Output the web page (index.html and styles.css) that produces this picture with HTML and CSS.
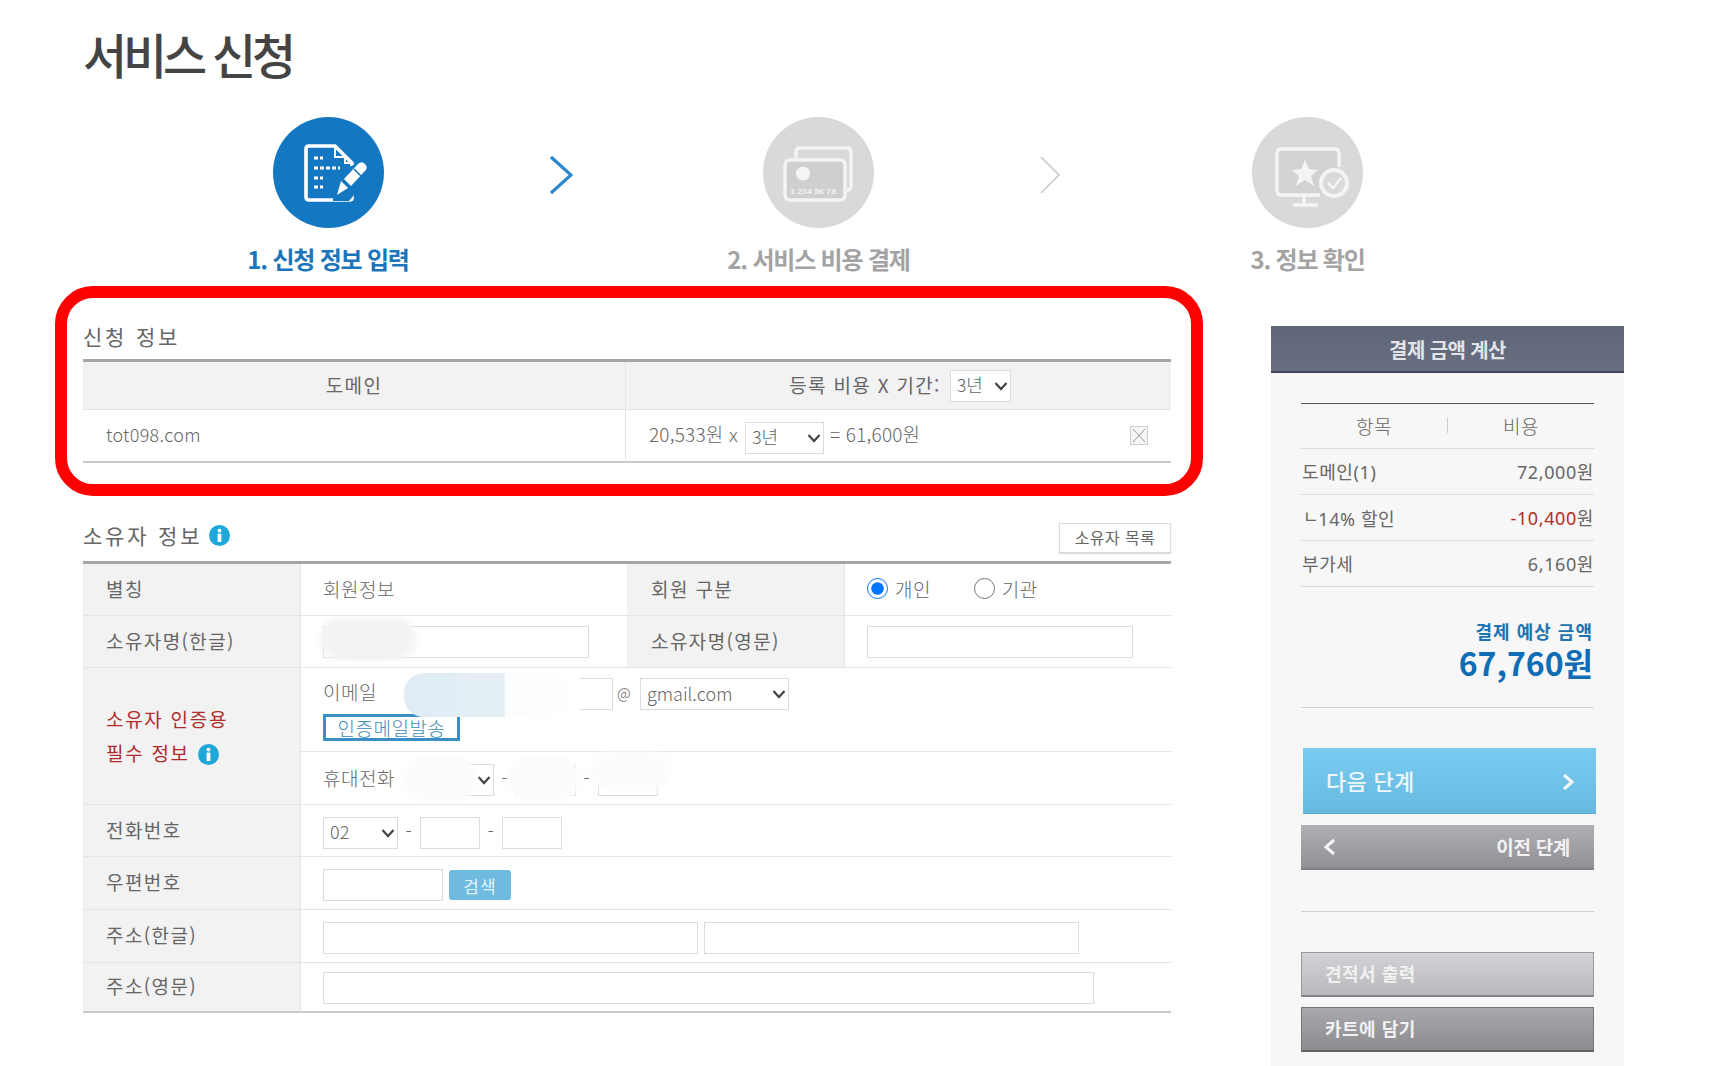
FILE: index.html
```html
<!DOCTYPE html>
<html lang="ko">
<head>
    <meta charset="UTF-8">
    <title>서비스 신청</title>
    <link rel="stylesheet" href="styles.css">
</head>
<body>
<div class="page">
    <div class="main">
        <h1 class="page-title">서비스 신청</h1>

        <div class="steps">
            <div class="step active">
                <div class="step-circle">
                    <svg viewBox="0 0 111 111" width="111" height="111">
                        <path d="M36 29 H62 L79 46 V81 Q79 83 77 83 H36 Q33 83 33 80 V32 Q33 29 36 29 Z" fill="none" stroke="#fff" stroke-width="3.6"/>
                        <path d="M62 29 V40 H72 V46 H79" fill="none" stroke="#fff" stroke-width="2"/>
                        <path d="M41 41 h9 M41 51 h26 M41 61 h9 M41 70 h9" stroke="#fff" stroke-width="3" stroke-dasharray="4 2" fill="none"/>
                        <path d="M60 56 L86 46 L96 60 L76 84 H60 Z" fill="#1477c2"/>
                        <path d="M64 78 L68 64 L75 71 Z" fill="#fff"/>
                        <path d="M71 62 L84 48 Q88 43 92 47 Q96 51 91 55 L78 69 Z" fill="#fff"/>
                        <path d="M81 52 L88 59" stroke="#1477c2" stroke-width="1.5"/>
                    </svg>
                </div>
                <div class="step-label">1. 신청 정보 입력</div>
            </div>
            <div class="step-arrow arrow-first">
                <svg viewBox="0 0 24 40" width="24" height="40"><path d="M2 2 L22 20 L2 38" fill="none" stroke="#2b88cc" stroke-width="3.2"/></svg>
            </div>
            <div class="step">
                <div class="step-circle">
                    <svg viewBox="0 0 111 111" width="111" height="111">
                        <path d="M33 41 V35 Q33 31 37 31 H84 Q88 31 88 35 V69 Q88 73 84 73 H82" fill="none" stroke="#f4f4f4" stroke-width="3.5"/>
                        <rect x="22" y="43" width="60" height="40" rx="5" fill="#cfcfcf" stroke="#f4f4f4" stroke-width="3.5"/>
                        <circle cx="40" cy="56.500" r="7" fill="#f4f4f4"/>
                        <text x="27" y="77" class="card-no" textLength="46" lengthAdjust="spacingAndGlyphs">1 234 56 78</text>
                    </svg>
                </div>
                <div class="step-label">2. 서비스 비용 결제</div>
            </div>
            <div class="step-arrow">
                <svg viewBox="0 0 24 40" width="24" height="40"><path d="M2 2 L20 20 L2 38" fill="none" stroke="#c9c9c9" stroke-width="1.6"/></svg>
            </div>
            <div class="step">
                <div class="step-circle">
                    <svg viewBox="0 0 111 111" width="111" height="111">
                        <path d="M68 78 H30 Q25 78 25 73 V37 Q25 32 30 32 H82 Q87 32 87 37 V50" fill="#d2d2d2" stroke="#f4f4f4" stroke-width="3.5"/>
                        <path d="M52 78 V88 M41 88 H66" fill="none" stroke="#f4f4f4" stroke-width="3.5"/>
                        <path d="M53 43 L57 52 L66 53 L59 59 L62 69 L53 63 L44 69 L47 59 L40 53 L49 52 Z" fill="#f4f4f4"/>
                        <circle cx="82" cy="66" r="13" fill="#d9d9d9" stroke="#f4f4f4" stroke-width="4"/>
                        <path d="M76 66 L81 71 L89 61" fill="none" stroke="#f4f4f4" stroke-width="2.6"/>
                    </svg>
                </div>
                <div class="step-label">3. 정보 확인</div>
            </div>
        </div>

        <div class="section-head first">
            <h2 class="section-title">신청 정보</h2>
        </div>
        <table class="order-table">
            <colgroup><col class="col-domain"><col></colgroup>
            <tr class="order-head">
                <th>도메인</th>
                <th>
                    <div class="term-head">
                        <span>등록 비용 X 기간:</span>
                        <select class="sel sel-head"><option>3년</option></select>
                    </div>
                </th>
            </tr>
            <tr class="order-row">
                <td class="domain-name">tot098.com</td>
                <td>
                    <div class="price-line">
                        <span>20,533원 x</span>
                        <select class="sel sel-year"><option>3년</option></select>
                        <span>= 61,600원</span>
                        <button class="remove-btn" type="button">
                            <svg viewBox="0 0 18 19" width="18" height="19"><path d="M3 3 L15 16 M15 3 L3 16" stroke="#999" stroke-width="1"/></svg>
                        </button>
                    </div>
                </td>
            </tr>
        </table>

        <div class="section-head">
            <h2 class="section-title">소유자 정보
                <svg class="info" viewBox="0 0 21 21" width="21" height="21"><circle cx="10.5" cy="10.5" r="10.5" fill="#1fa7d9"/><circle cx="10.5" cy="5.6" r="1.9" fill="#fff"/><rect x="8.6" y="8.6" width="3.8" height="8.4" fill="#fff"/></svg>
            </h2>
            <button class="owner-list" type="button">소유자 목록</button>
        </div>
        <table class="owner-table">
            <colgroup><col class="col-label"><col class="col-value"><col class="col-label"><col></colgroup>
            <tr class="h52">
                <th>별칭</th>
                <td class="plain">회원정보</td>
                <th class="th-mid">회원 구분</th>
                <td>
                    <label class="radio"><input type="radio" name="kind" checked> <span>개인</span></label>
                    <label class="radio"><input type="radio" name="kind"> <span>기관</span></label>
                </td>
            </tr>
            <tr class="h52">
                <th>소유자명(한글)</th>
                <td><input class="inp w266" type="text"></td>
                <th class="th-mid">소유자명(영문)</th>
                <td><input class="inp w266" type="text"></td>
            </tr>
            <tr class="h84">
                <th rowspan="2" class="required">소유자 인증용<br>필수 정보
                    <svg class="info" viewBox="0 0 21 21" width="21" height="21"><circle cx="10.5" cy="10.5" r="10.5" fill="#1fa7d9"/><circle cx="10.5" cy="5.6" r="1.9" fill="#fff"/><rect x="8.6" y="8.6" width="3.8" height="8.4" fill="#fff"/></svg>
                </th>
                <td colspan="3" class="email-cell">
                    <div class="field-line">
                        <span class="field-name w87">이메일</span>
                        <input class="inp w203" type="text">
                        <span class="at">@</span>
                        <select class="sel sel-mail"><option>gmail.com</option></select>
                    </div>
                    <button class="verify-btn" type="button">인증메일발송</button>
                </td>
            </tr>
            <tr class="h53">
                <td colspan="3" class="shift">
                    <div class="field-line">
                        <span class="field-name w95">휴대전화</span>
                        <select class="sel sel-phone"><option></option></select>
                        <span class="dash">-</span>
                        <input class="inp w60" type="text">
                        <span class="dash">-</span>
                        <input class="inp w60" type="text">
                    </div>
                </td>
            </tr>
            <tr class="h52">
                <th>전화번호</th>
                <td colspan="3" class="shift">
                    <div class="field-line">
                        <select class="sel sel-area"><option>02</option></select>
                        <span class="dash">-</span>
                        <input class="inp w60" type="text">
                        <span class="dash">-</span>
                        <input class="inp w60" type="text">
                    </div>
                </td>
            </tr>
            <tr class="h53">
                <th>우편번호</th>
                <td colspan="3" class="shift">
                    <div class="field-line">
                        <input class="inp w120" type="text">
                        <button class="search-btn" type="button">검색</button>
                    </div>
                </td>
            </tr>
            <tr class="h53">
                <th>주소(한글)</th>
                <td colspan="3" class="shift">
                    <div class="field-line">
                        <input class="inp w374" type="text">
                        <input class="inp w374" type="text">
                    </div>
                </td>
            </tr>
            <tr class="h50 last">
                <th>주소(영문)</th>
                <td colspan="3" class="shift-sm"><input class="inp w771" type="text"></td>
            </tr>
        </table>
    </div>

    <aside class="side">
        <div class="side-head">결제 금액 계산</div>
        <div class="side-body">
            <div class="calc-head">
                <span>항목</span>
                <i class="calc-sep"></i>
                <span>비용</span>
            </div>
            <div class="calc-row"><span>도메인(1)</span><span>72,000원</span></div>
            <div class="calc-row"><span><b class="corner">ㄴ</b>14% 할인</span><span><em class="minus">-10,400</em>원</span></div>
            <div class="calc-row"><span>부가세</span><span>6,160원</span></div>

            <div class="total">
                <div class="total-label">결제 예상 금액</div>
                <div class="total-amount">67,760원</div>
            </div>

            <button class="btn-next" type="button">
                <span>다음 단계</span>
                <svg viewBox="0 0 14 18" width="14" height="18"><path d="M3 2 L11 9 L3 16" fill="none" stroke="#f2f9fd" stroke-width="3"/></svg>
            </button>
            <button class="btn-prev" type="button">
                <svg viewBox="0 0 14 18" width="14" height="18"><path d="M11 2 L3 9 L11 16" fill="none" stroke="#f5f5f5" stroke-width="3"/></svg>
                <span>이전 단계</span>
            </button>
            <div class="side-line"></div>
            <button class="btn-quote" type="button">견적서 출력</button>
            <button class="btn-cart" type="button">카트에 담기</button>
        </div>
    </aside>

    <!-- 빨간 강조 테두리, 개인정보 가림 -->
    <div class="highlight-box"></div>
    <div class="mask mask-name"></div>
    <div class="mask mask-email"></div>
    <div class="mask mask-phone1"></div>
    <div class="mask mask-phone2"></div>
    <div class="mask mask-phone3"></div>
</div>
</body>
</html>
```

FILE: styles.css
```css
/* 기본 */
* {
    box-sizing: border-box;
}

body {
    margin: 0;
    background: #fff;
    color: #666;
    font-family: "Noto Sans CJK KR", "Noto Sans", sans-serif;
    font-weight: 300;
}

.page {
    position: relative;
    display: flex;
    height: 1066px;
    overflow: hidden;
}

.main {
    flex: none;
    width: 1088px;
    margin-left: 83px;
}

/* 제목 */
.page-title {
    margin: 0;
    height: 117px;
    line-height: 107px;
    font-size: 48px;
    font-weight: 500;
    letter-spacing: -4.2px;
    color: #444;
}

/* 단계 표시 */
.steps {
    display: flex;
    align-items: flex-start;
    height: 160px;
    padding-left: 134px;
}

.step {
    flex: none;
    width: 222px;
    display: flex;
    flex-direction: column;
    align-items: center;
}

.step-circle {
    width: 111px;
    height: 111px;
    border-radius: 50%;
    background: #d9d9d9;
}

.step.active .step-circle {
    background: #1477c2;
}

.step-circle svg {
    display: block;
}

.card-no {
    font-family: "Liberation Sans", sans-serif;
    font-size: 8px;
    font-weight: 700;
    fill: #f4f4f4;
}

.step-label {
    margin-top: 14px;
    line-height: 34px;
    font-size: 24px;
    font-weight: 700;
    letter-spacing: -1.2px;
    color: #a3a3a3;
    white-space: nowrap;
}

.step.active .step-label {
    color: #1a75bb;
}

.step-arrow {
    flex: none;
    width: 267px;
    padding: 38px 0 0 109px;
}

.step-arrow.arrow-first {
    width: 268.5px;
    padding-left: 110px;
}

/* 섹션 제목 */
.section-head {
    display: flex;
    justify-content: space-between;
    align-items: flex-start;
    height: 38px;
    margin-top: 60px;
}

.section-head.first {
    height: 42px;
    margin-top: 40px;
    padding-bottom: 4px;
    align-items: center;
}

.section-title {
    display: flex;
    align-items: center;
    gap: 7px;
    margin: 0;
    line-height: 24px;
    font-size: 21px;
    font-weight: 400;
    letter-spacing: 2.8px;
    color: #666;
}

.info {
    flex: none;
    vertical-align: -4px;
}

.owner-list {
    width: 112px;
    height: 30px;
    padding: 0 0 2px;
    border: 1px solid #ddd;
    background: #fff;
    box-shadow: 0 1px 1px #ddd;
    font: 400 16px "Noto Sans CJK KR", sans-serif;
    letter-spacing: .4px;
    color: #666;
}

/* 표 공통 */
table {
    width: 1088px;
    table-layout: fixed;
    border-collapse: separate;
    border-spacing: 0;
    border-top: 3px solid #a6a6a6;
    font-size: 19px;
    letter-spacing: .5px;
}

th {
    font-weight: 400;
}

/* 신청 정보 */
.col-domain {
    width: 543px;
}

.order-head th {
    height: 48px;
    padding: 0 0 2px;
    background: #f2f2f2;
    border-bottom: 1px solid #e4e4e4;
    font-size: 19px;
    letter-spacing: 1.3px;
}

.order-head th:first-child,
.order-row td:first-child {
    border-right: 1px solid #e4e4e4;
}

.term-head {
    display: flex;
    justify-content: center;
    align-items: center;
    padding-left: 3px;
    margin-top: 2px;
}

.term-head span {
    margin-bottom: 2px;
}

.order-row td {
    height: 53px;
    padding: 0;
    border-bottom: 2px solid #c9c9c9;
}

.order-row td.domain-name {
    padding: 0 0 4px 23px;
    font-size: 18px;
    letter-spacing: .3px;
}

.price-line {
    display: flex;
    align-items: center;
    padding-left: 23px;
    font-size: 19px;
    letter-spacing: .2px;
}

.price-line span {
    margin-bottom: 4px;
}

.remove-btn {
    width: 18px;
    height: 19px;
    margin-left: auto;
    margin-right: 23px;
    padding: 0;
    border: 1px solid #ccc;
    background: #f5f5f5;
}

.remove-btn svg {
    display: block;
    margin: -1px;
}

/* 입력 */
.inp {
    height: 32px;
    padding: 0;
    border: 1px solid #dcdcdc;
    background: transparent;
    vertical-align: middle;
}

.w60 { width: 60px; }
.w120 { width: 120px; }
.w203 { width: 203px; }
.w266 { width: 266px; }
.w374 { width: 375px; }
.w771 { width: 771px; }

.sel {
    height: 32px;
    padding: 0 0 3px 6px;
    border: 1px solid #dcdcdc;
    appearance: none;
    background: #fff url("data:image/svg+xml,%3Csvg xmlns='http://www.w3.org/2000/svg' width='14' height='10'%3E%3Cpath d='M1.500 2 L7 8 L12.500 2' fill='none' stroke='%23444' stroke-width='2.200'/%3E%3C/svg%3E") no-repeat right 2px center;
    font: 300 18px "Noto Sans CJK KR", sans-serif;
    color: #666;
    vertical-align: middle;
}

.sel-head { width: 61px; margin-left: 9px; }
.sel-year { width: 79px; margin: 4px 6px 0 7px; }
.sel-mail { width: 149px; }
.sel-phone { width: 76px; }
.sel-area { width: 75px; }

/* 소유자 정보 */
.col-label {
    width: 218px;
}

.col-value {
    width: 326px;
}

.owner-table th {
    padding: 0 0 3px 23px;
    background: #f2f2f2;
    border-right: 1px solid #e4e4e4;
    border-bottom: 1px solid #e4e4e4;
    text-align: left;
    letter-spacing: 1.4px;
}

.owner-table th.th-mid {
    padding-left: 24px;
}

.owner-table td {
    padding: 0 0 0 22px;
    border-bottom: 1px solid #e4e4e4;
}

.owner-table td.plain {
    padding-bottom: 2px;
}

.owner-table td.shift {
    padding-top: 4px;
}

.owner-table td.shift-sm {
    padding-top: 2px;
}

.owner-table .last th,
.owner-table .last td {
    border-bottom: 2px solid #c9c9c9;
}

.h50 { height: 50px; }
.h52 { height: 52px; }
.h53 { height: 53px; }
.h84 { height: 84px; }

.owner-table th.required {
    padding-bottom: 1px;
    color: #b02a2a;
    line-height: 34px;
    letter-spacing: 1.7px;
}

.required .info {
    margin-left: 1px;
}

.owner-table td.email-cell {
    padding-top: 10px;
    vertical-align: top;
}

.field-line {
    display: flex;
    align-items: center;
}

.field-name {
    flex: none;
    margin-bottom: 5px;
}

.w87 { width: 87px; }
.w95 { width: 95px; }

.at {
    width: 27px;
    padding: 0 0 4px 4px;
    font-size: 15px;
}

.dash {
    width: 22px;
    margin-bottom: 5px;
    text-align: center;
}

.verify-btn {
    display: block;
    width: 137px;
    height: 27px;
    margin-top: 4px;
    padding: 0;
    border: 3px solid #3a8fc9;
    background: #fff;
    font: 300 19px/18px "Noto Sans CJK KR", sans-serif;
    letter-spacing: .5px;
    color: #3d8bb5;
    overflow: hidden;
}

.search-btn {
    width: 62px;
    height: 30px;
    margin-left: 6px;
    padding: 0;
    border: 0;
    border-radius: 3px;
    background: #6fbbe0;
    font: 400 17px "Noto Sans CJK KR", sans-serif;
    letter-spacing: 1px;
    color: #e4f3fa;
}

.field-line .w374 + .w374 {
    margin-left: 6px;
}

.radio {
    display: inline-flex;
    align-items: center;
    gap: 7px;
    margin-right: 37px;
}

.radio input {
    width: 21px;
    height: 21px;
    margin: 0;
}

/* 오른쪽 계산 영역 */
.side {
    flex: none;
    width: 353px;
    height: 740px;
    margin: 326px 0 0 100px;
    background: #f7f7f7;
}

.side-head {
    height: 47px;
    line-height: 47px;
    background: linear-gradient(#5f6679, #686e80);
    border-bottom: 2px solid #43475a;
    text-align: center;
    font-size: 20px;
    font-weight: 700;
    letter-spacing: -.6px;
    color: #e2e3e6;
}

.side-body {
    padding: 30px 30px 0;
}

.calc-head,
.calc-row {
    display: flex;
    align-items: center;
    height: 46px;
    padding-bottom: 2px;
    border-bottom: 1px solid #dcdcdc;
    font-size: 18px;
    letter-spacing: .6px;
}

.calc-head {
    border-top: 1px solid #555;
    font-size: 19px;
}

.calc-head span {
    flex: 1;
    text-align: center;
}

.calc-sep {
    width: 1px;
    height: 15px;
    background: #ccc;
}

.calc-row {
    justify-content: space-between;
    padding-left: 1px;
    font-family: "Noto Sans", "Noto Sans CJK KR", sans-serif;
    font-weight: 400;
}

.corner {
    font-weight: 400;
    font-size: 17px;
    vertical-align: 3px;
    margin: 0 -1px 0 1px;
}

.minus {
    font-style: normal;
    color: #b52a1c;
}

.total {
    height: 121px;
    padding: 32px 1px 0 0;
    border-bottom: 1px solid #d4d4d4;
    text-align: right;
}

.total-label {
    height: 24px;
    line-height: 24px;
    font-size: 18px;
    font-weight: 700;
    letter-spacing: 1px;
    color: #1d72b0;
}

.total-amount {
    height: 36px;
    line-height: 38px;
    font-size: 32px;
    font-weight: 700;
    color: #0f6db5;
}

.btn-next,
.btn-prev,
.btn-quote,
.btn-cart {
    display: flex;
    align-items: center;
    width: 293px;
    height: 45px;
    padding: 0 24px 0 23px;
    border: 0;
    font-family: "Noto Sans CJK KR", sans-serif;
    font-weight: 700;
}

.btn-next {
    justify-content: space-between;
    height: 66px;
    margin: 40px 0 0 2px;
    padding: 2px 21px 0 23px;
    background: linear-gradient(#7acbf1, #68b9df);
    border-bottom: 1px solid #5aa8cf;
    font-size: 22px;
    font-weight: 500;
    letter-spacing: .3px;
    color: #eef8fd;
}

.btn-next span {
    margin-bottom: 4px;
}

.btn-prev {
    justify-content: space-between;
    margin-top: 11px;
    padding-left: 22px;
    background: linear-gradient(#b0b0b4, #909095);
    border-bottom: 2px solid #808085;
    font-size: 19px;
    letter-spacing: -.3px;
    color: #f2f2f2;
}

.side-line {
    height: 1px;
    margin-top: 41px;
    background: #cfcfcf;
}

.btn-quote {
    margin-top: 40px;
    padding-bottom: 2px;
    background: linear-gradient(#d3d3d7, #b9b9bd);
    border: 1px solid #98989c;
    border-bottom: 2px solid #858589;
    font-size: 18px;
    letter-spacing: .5px;
    color: #f1f1f1;
}

.btn-cart {
    margin-top: 10px;
    padding-bottom: 2px;
    background: linear-gradient(#a9a9ad, #8b8b90);
    border: 1px solid #77777b;
    border-bottom: 2px solid #66666a;
    font-size: 18px;
    letter-spacing: .5px;
    color: #f1f1f1;
}

/* 겹쳐 그리는 요소 */
.highlight-box {
    position: absolute;
    left: 55px;
    top: 286px;
    width: 1148px;
    height: 210px;
    border: 12px solid #f00;
    border-radius: 38px;
    pointer-events: none;
}

.mask {
    position: absolute;
    pointer-events: none;
}

.mask-name {
    left: 320px;
    top: 618px;
    width: 96px;
    height: 42px;
    border-radius: 21px;
    background: #f3f3f3;
    filter: blur(3px);
}

.mask-email {
    left: 404px;
    top: 673px;
    width: 176px;
    height: 44px;
    border-radius: 20px 0 0 20px;
    background: linear-gradient(90deg, #dfecf4 0, #e5eff6 57%, #fbfcfd 57.5%, #fff 100%);
}

.mask-phone1 {
    left: 405px;
    top: 756px;
    width: 72px;
    height: 46px;
    border-radius: 23px;
    background: #fcfcfc;
    filter: blur(2px);
}

.mask-phone2 {
    left: 508px;
    top: 755px;
    width: 72px;
    height: 46px;
    border-radius: 23px;
    background: #fcfcfc;
    filter: blur(2px);
}

.mask-phone3 {
    left: 590px;
    top: 752px;
    width: 82px;
    height: 38px;
    border-radius: 19px;
    background: #fcfcfc;
    filter: blur(2px);
}
```
